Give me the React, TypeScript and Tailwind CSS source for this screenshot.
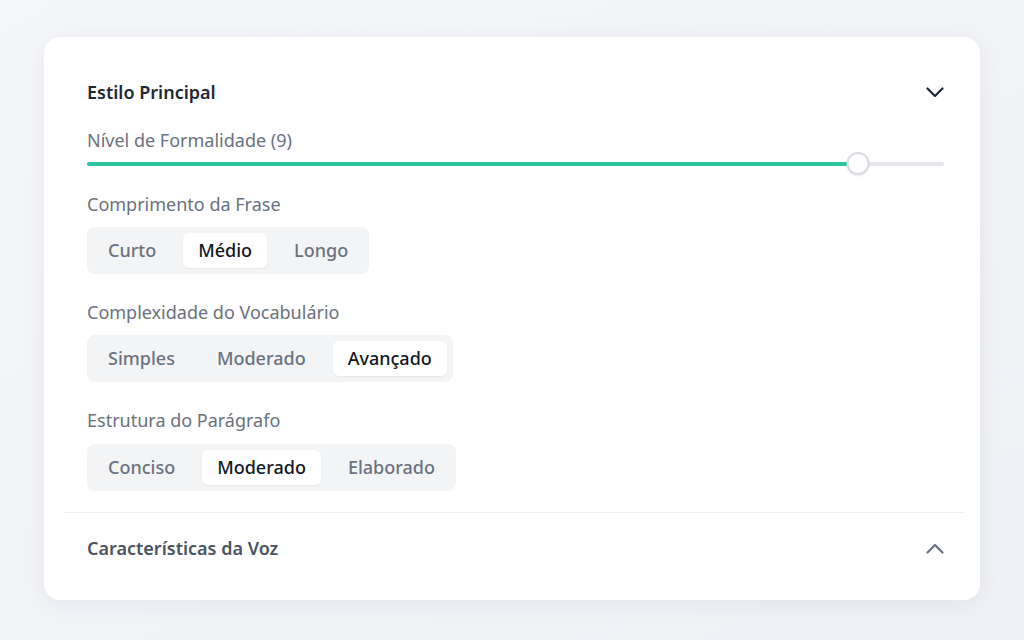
import React, { useState } from "react";

const font = { fontFamily: '"Noto Sans", "Open Sans", sans-serif' };

function Chevron({ up, className }: { up?: boolean; className?: string }) {
  return (
    <svg width="18" height="11" viewBox="0 0 18 11" fill="none" className={className}>
      <polyline
        points={up ? "1.5,9.5 9,2 16.5,9.5" : "1.5,1.5 9,9 16.5,1.5"}
        stroke="currentColor"
        strokeWidth="2.2"
        strokeLinecap="round"
        strokeLinejoin="round"
      />
    </svg>
  );
}

function Segmented({ options, value }: { options: string[]; value: string }) {
  const [v, setV] = useState(value);
  return (
    <div className="inline-flex gap-3 rounded-lg bg-[#f3f4f6] p-1.5">
      {options.map((o) => (
        <button
          key={o}
          onClick={() => setV(o)}
          className={
            o === v
              ? "h-[35px] rounded-md bg-white px-[15px] text-[18px] font-medium text-[#111827] shadow-[0_1px_2px_rgba(0,0,0,0.06)]"
              : "h-[35px] rounded-md px-[15px] text-[18px] font-medium text-[#6b7280]"
          }
        >
          {o}
        </button>
      ))}
    </div>
  );
}

function Slider({ value, max }: { value: number; max: number }) {
  const pct = (value / max) * 100;
  return (
    <div className="relative h-[22px] w-full">
      <div className="absolute left-0 right-0 top-[10px] h-[4px] rounded-full bg-[#e5e7eb]" />
      <div
        className="absolute left-0 top-[10px] h-[4px] rounded-full bg-[#2ec4a2]"
        style={{ width: `${pct}%` }}
      />
      <div
        className="absolute top-[0px] h-[23px] w-[23px] -translate-x-1/2 rounded-full border-2 border-[#d9dce1] bg-white shadow-[0_1px_2px_rgba(0,0,0,0.08)]"
        style={{ left: `${pct}%` }}
      />
    </div>
  );
}

export default function App() {
  return (
    <div
      className="min-h-screen bg-gradient-to-br from-[#f5f6f9] to-[#eef0f5] px-[44px] pt-[37px] pb-[40px]"
      style={font}
    >
      <div className="h-[563px] rounded-2xl bg-white py-5 pl-5 pr-[15px] shadow-[0_4px_24px_rgba(30,40,80,0.06)]">
        <div className="border-b border-[#eceef1] pl-[23px] pr-[21px] pt-[21px] pb-[21px]">
          <div className="flex h-[28px] items-center justify-between">
            <h2 className="text-[18px] font-semibold text-[#1f2937]">Estilo Principal</h2>
            <Chevron className="text-[#1f2937]" />
          </div>
          <div className="mt-[22px] text-[18px] leading-[24px] text-[#6b7280]">Nível de Formalidade (9)</div>
          <Slider value={9} max={10} />
          <div className="mt-[18px] text-[18px] leading-[24px] text-[#6b7280]">Comprimento da Frase</div>
          <div className="mt-[11px]">
            <Segmented options={["Curto", "Médio", "Longo"]} value="Médio" />
          </div>
          <div className="mt-[26px] text-[18px] leading-[24px] text-[#6b7280]">Complexidade do Vocabulário</div>
          <div className="mt-[11px]">
            <Segmented options={["Simples", "Moderado", "Avançado"]} value="Avançado" />
          </div>
          <div className="mt-[26px] text-[18px] leading-[24px] text-[#6b7280]">Estrutura do Parágrafo</div>
          <div className="mt-[12px]">
            <Segmented options={["Conciso", "Moderado", "Elaborado"]} value="Moderado" />
          </div>
        </div>
        <div className="pl-[23px] pr-[21px] pt-[21px]">
          <div className="flex h-[28px] items-center justify-between">
            <h2 className="text-[18px] font-semibold text-[#4b5563]">Características da Voz</h2>
            <Chevron up className="text-[#6b7280]" />
          </div>
        </div>
      </div>
    </div>
  );
}
